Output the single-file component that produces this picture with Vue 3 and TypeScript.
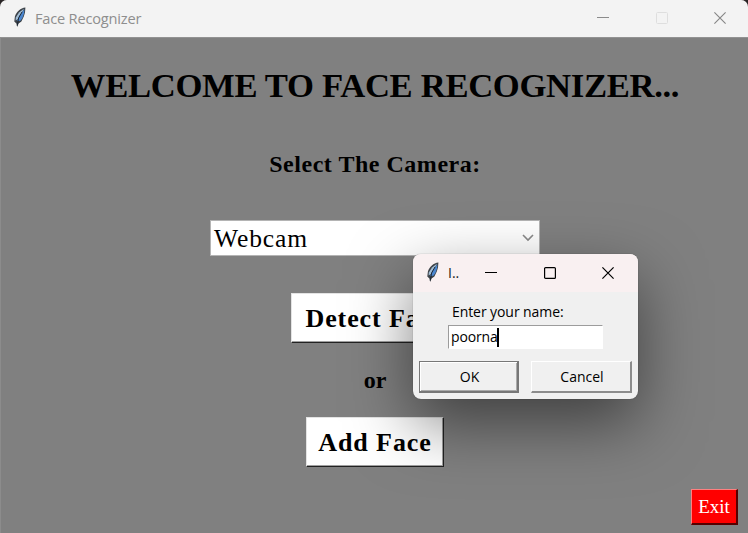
<script setup lang="ts">
import { ref } from 'vue'

const camera = ref('Webcam')
const personName = ref('poorna')
</script>

<template>
  <main class="window">
    <header class="titlebar">
      <svg class="feather" viewBox="0 0 14 20">
        <path d="M12.4 .6 C7.5 1 3.4 5.2 1.9 9.4 L1.3 14.6 L3.4 16.4 L4.2 20 L5.6 16.6 L8.4 14.6 L10.8 9.6 L12 5.4 Z" fill="#3c4248" />
        <path d="M11.2 1.6 L6 5.4 L2.8 10.4 L2.6 13.6 L5 12 Z" fill="#a3bdd3" />
        <path d="M11.4 2.2 L11 6.4 L9.4 11 L7.4 13.8 L4 14.2 L6 9 Z" fill="#4a86cf" />
        <path d="M9 5 L5.6 11 L4.3 18.5" fill="none" stroke="#1d2834" stroke-width="1" />
      </svg>
      <span class="app-title">Face Recognizer</span>
      <nav class="controls">
        <svg viewBox="0 0 12 12"><path d="M0 5.5H12" stroke="#8b8b8b" /></svg>
        <svg viewBox="0 0 12 12"><rect x=".5" y=".5" width="11" height="11" rx="1" fill="none" stroke="#dedede" /></svg>
        <svg viewBox="0 0 12 12"><path d="M.4 .4L11.6 11.6M11.6 .4L.4 11.6" stroke="#858585" stroke-width="1.1" /></svg>
      </nav>
    </header>

    <section class="content">
      <h1>WELCOME TO FACE RECOGNIZER...</h1>
      <h2>Select The Camera:</h2>
      <div class="combo">
        <span>{{ camera }}</span>
        <svg viewBox="0 0 12 8"><path d="M1 1L6 6L11 1" fill="none" stroke="#8a8a8a" stroke-width="1.6" /></svg>
      </div>
      <button class="action detect">Detect Face</button>
      <p class="or">or</p>
      <button class="action add">Add Face</button>
      <button class="exit">Exit</button>
    </section>

    <aside class="dialog">
      <header class="dialog-bar">
        <svg class="feather" viewBox="0 0 14 20">
          <path d="M12.4 .6 C7.5 1 3.4 5.2 1.9 9.4 L1.3 14.6 L3.4 16.4 L4.2 20 L5.6 16.6 L8.4 14.6 L10.8 9.6 L12 5.4 Z" fill="#3c4248" />
          <path d="M11.2 1.6 L6 5.4 L2.8 10.4 L2.6 13.6 L5 12 Z" fill="#a3bdd3" />
          <path d="M11.4 2.2 L11 6.4 L9.4 11 L7.4 13.8 L4 14.2 L6 9 Z" fill="#4a86cf" />
          <path d="M9 5 L5.6 11 L4.3 18.5" fill="none" stroke="#1d2834" stroke-width="1" />
        </svg>
        <span class="dialog-title">I..</span>
        <nav class="dialog-controls">
          <svg viewBox="0 0 12 12"><path d="M0 5.5H12" stroke="#000" /></svg>
          <svg viewBox="0 0 12 12"><rect x=".6" y=".6" width="10.8" height="10.8" rx="1" fill="none" stroke="#000" stroke-width="1.2" /></svg>
          <svg viewBox="0 0 12 12"><path d="M.4 .4L11.6 11.6M11.6 .4L.4 11.6" stroke="#000" stroke-width="1.2" /></svg>
        </nav>
      </header>
      <div class="dialog-body">
        <label>Enter your name:</label>
        <div class="entry"><span>{{ personName }}</span><i class="caret"></i></div>
        <div class="buttons">
          <button class="dlg-btn ok">OK</button>
          <button class="dlg-btn cancel">Cancel</button>
        </div>
      </div>
    </aside>
  </main>
</template>

<style>
body {
  background: #2a2526;
}
</style>

<style scoped>
* {
  box-sizing: border-box;
}
.window {
  position: relative;
  width: 748px;
  height: 533px;
  overflow: hidden;
  border-radius: 7px 7px 0 0;
  background: #808080;
}
.titlebar {
  display: flex;
  align-items: center;
  height: 37px;
  padding: 0 22px 0 13px;
  background: #f3f3f3;
}
.feather {
  width: 14px;
  height: 20px;
  flex: none;
}
.titlebar .feather {
  margin-top: -4px;
}
.app-title {
  margin: -2px 0 0 8px;
  font: 14.6px/20px "Open Sans", "Noto Sans", sans-serif;
  letter-spacing: -0.2px;
  color: #8e8e8e;
}
.controls {
  display: flex;
  gap: 46.5px;
  margin: -1px 0 0 auto;
}
.controls svg,
.dialog-controls svg {
  display: block;
  width: 12px;
  height: 12px;
}
.content {
  display: flex;
  flex-direction: column;
  align-items: center;
  height: 496px;
  padding: 23px 8px 8px 9px;
  border-top: 1px solid #929292;
  border-left: 1px solid #8c8c8c;
  font-family: "Liberation Serif", serif;
}
h1 {
  margin: -1px 0 0;
  font-size: 34.67px;
  line-height: 50px;
  letter-spacing: -0.34px;
  white-space: nowrap;
}
h2 {
  margin: 38px 0 0;
  font-size: 24px;
  line-height: 32px;
  letter-spacing: 0.52px;
  white-space: nowrap;
}
.combo {
  display: flex;
  align-items: center;
  justify-content: space-between;
  width: 330px;
  height: 36px;
  margin-top: 40px;
  padding: 2px 5px 0 3px;
  border: 1px solid #b4b4b4;
  background: #fff;
  font-size: 25.5px;
  letter-spacing: 0.9px;
}
.combo svg {
  width: 12px;
  height: 8px;
  margin-top: -2px;
}
.action {
  height: 50px;
  margin: 0;
  padding: 2px 0 0;
  border: 1px solid;
  border-color: #e3e3e3 #222 #222 #e3e3e3;
  box-shadow: inset -1px -1px #a0a0a0;
  background: #fff;
  color: #000;
  font: bold 26px/46px "Liberation Serif", serif;
  letter-spacing: 0.9px;
  white-space: nowrap;
}
.detect {
  width: 168px;
  margin-top: 37px;
}
.add {
  width: 138px;
  margin-top: 22px;
}
.or {
  margin: 22px 0 0;
  font-size: 24px;
  font-weight: bold;
  line-height: 30px;
}
.exit {
  align-self: flex-end;
  width: 47px;
  height: 36px;
  margin: 22px 2px 0 0;
  padding: 0;
  border: solid;
  border-width: 1px 2px 2px 1px;
  border-color: #ff8080 #500 #500 #ff8080;
  background: #f00;
  color: #fff;
  font: 19px/34px "Liberation Serif", serif;
}
.dialog {
  position: absolute;
  left: 413px;
  top: 254px;
  width: 225px;
  height: 145px;
  overflow: hidden;
  border-radius: 8px;
  background: #f0f0f0;
  box-shadow: 0 0 1px rgba(0, 0, 0, 0.5), 0 24px 64px rgba(0, 0, 0, 0.5);
  font-family: "Open Sans", "Noto Sans", sans-serif;
}
.dialog-bar {
  display: flex;
  align-items: center;
  height: 38px;
  padding: 0 24px 0 13px;
  background: #f9f0f1;
}
.dialog-bar .feather {
  margin-top: -3px;
}
.dialog-title {
  margin-left: 8px;
  font-size: 14px;
  line-height: 20px;
  color: #222;
}
.dialog-controls {
  display: flex;
  gap: 46.5px;
  margin-left: auto;
}
.dialog-body {
  display: flex;
  flex-direction: column;
  padding: 10px 6px 6px;
  color: #000;
}
label {
  margin-left: 33px;
  font-size: 14px;
  line-height: 20px;
  letter-spacing: -0.08px;
}
.entry {
  display: flex;
  align-items: center;
  width: 155px;
  height: 24px;
  margin: 3px 0 0 29px;
  padding-left: 2px;
  border: 1px solid;
  border-color: #9c9c9c #fff #fff #9c9c9c;
  background: #fff;
  font-size: 14px;
  letter-spacing: -0.15px;
}
.entry span {
  margin-top: -2px;
}
.caret {
  width: 2px;
  height: 19px;
  margin-left: -1px;
  background: #000;
}
.buttons {
  display: flex;
  gap: 12px;
  margin-top: 12px;
}
.dlg-btn {
  height: 32px;
  padding: 0 0 0 2px;
  border: solid;
  border-width: 1px 2px 2px 1px;
  border-color: #fff #8c8c8c #8c8c8c #fff;
  background: #f0f0f0;
  color: #000;
  font: 14px/28px "Open Sans", "Noto Sans", sans-serif;
}
.ok {
  width: 100px;
  border-color: #777;
  box-shadow: inset 1px 1px #fff, inset -1px -1px #aaa;
}
.cancel {
  width: 101px;
}
</style>
